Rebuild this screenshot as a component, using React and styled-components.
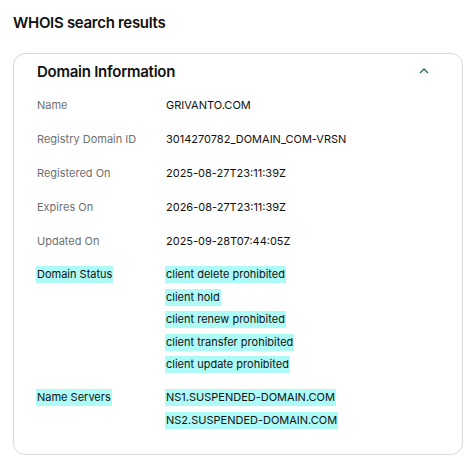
import React from 'react'
import styled, { createGlobalStyle } from 'styled-components'

const GlobalStyle = createGlobalStyle`
    body {
        margin: 0;
        background: #fff;
        font-family: Inter, "Noto Sans", sans-serif;
        color: #111;
    }
`

const info = [
    { label: 'Name', values: ['GRIVANTO.COM'] },
    { label: 'Registry Domain ID', values: ['3014270782_DOMAIN_COM-VRSN'] },
    { label: 'Registered On', values: ['2025-08-27T23:11:39Z'] },
    { label: 'Expires On', values: ['2026-08-27T23:11:39Z'] },
    { label: 'Updated On', values: ['2025-09-28T07:44:05Z'] },
    {
        label: 'Domain Status',
        mark: true,
        values: [
            'client delete prohibited',
            'client hold',
            'client renew prohibited',
            'client transfer prohibited',
            'client update prohibited',
        ],
    },
    {
        label: 'Name Servers',
        mark: true,
        values: ['NS1.SUSPENDED-DOMAIN.COM', 'NS2.SUSPENDED-DOMAIN.COM'],
    },
]

function App() {
    return (
        <Page>
            <GlobalStyle />
            <Title>WHOIS search results</Title>
            <Card>
                <CardHeader>
                    <h2>Domain Information</h2>
                    <Chevron viewBox="0 0 10 6" aria-hidden="true">
                        <polyline points="1,5 5,1 9,5" />
                    </Chevron>
                </CardHeader>
                {info.map(row => (
                    <Row key={row.label}>
                        <Label>
                            <Text $mark={row.mark}>{row.label}</Text>
                        </Label>
                        <Values>
                            {row.values.map(v => (
                                <Text key={v} $mark={row.mark} $value>{v}</Text>
                            ))}
                        </Values>
                    </Row>
                ))}
            </Card>
        </Page>
    )
}

export default App

const Page = styled.div`
    padding: 12px 9px 9px 13px;
`

const Title = styled.h1`
    margin: 0 0 20px;
    font-size: 15px;
    line-height: 21px;
    font-weight: 600;
    letter-spacing: -0.3px;
    color: #111;
`

const Card = styled.section`
    border: 1px solid #d9d9d9;
    border-radius: 12px;
    padding: 0 24px 17px 23px;
`

const CardHeader = styled.div`
    display: flex;
    align-items: center;
    justify-content: space-between;
    height: 34px;
    h2 {
        margin: 0;
        font-size: 15px;
        font-weight: 600;
        letter-spacing: -0.25px;
        color: #111;
    }
`

const Chevron = styled.svg`
    width: 10px;
    height: 6px;
    margin-right: 9px;
    fill: none;
    stroke: #1d6c66;
    stroke-width: 1.3;
`

const Row = styled.div`
    display: grid;
    grid-template-columns: 129px 1fr;
    padding: 8px 0;
`

const Label = styled.div`
    display: flex;
    align-items: flex-start;
`

const Values = styled.div`
    display: flex;
    flex-direction: column;
    align-items: flex-start;
    gap: 5.5px;
`

const Text = styled.span`
    display: inline-block;
    font-size: 11px;
    line-height: ${p => (p.$mark ? '17px' : '18px')};
    color: ${p => (p.$value || p.$mark ? '#111' : '#707070')};
    background: ${p => (p.$mark ? '#aefaf6' : 'transparent')};
    padding: 0 1px;
    margin-left: -1px;
`
